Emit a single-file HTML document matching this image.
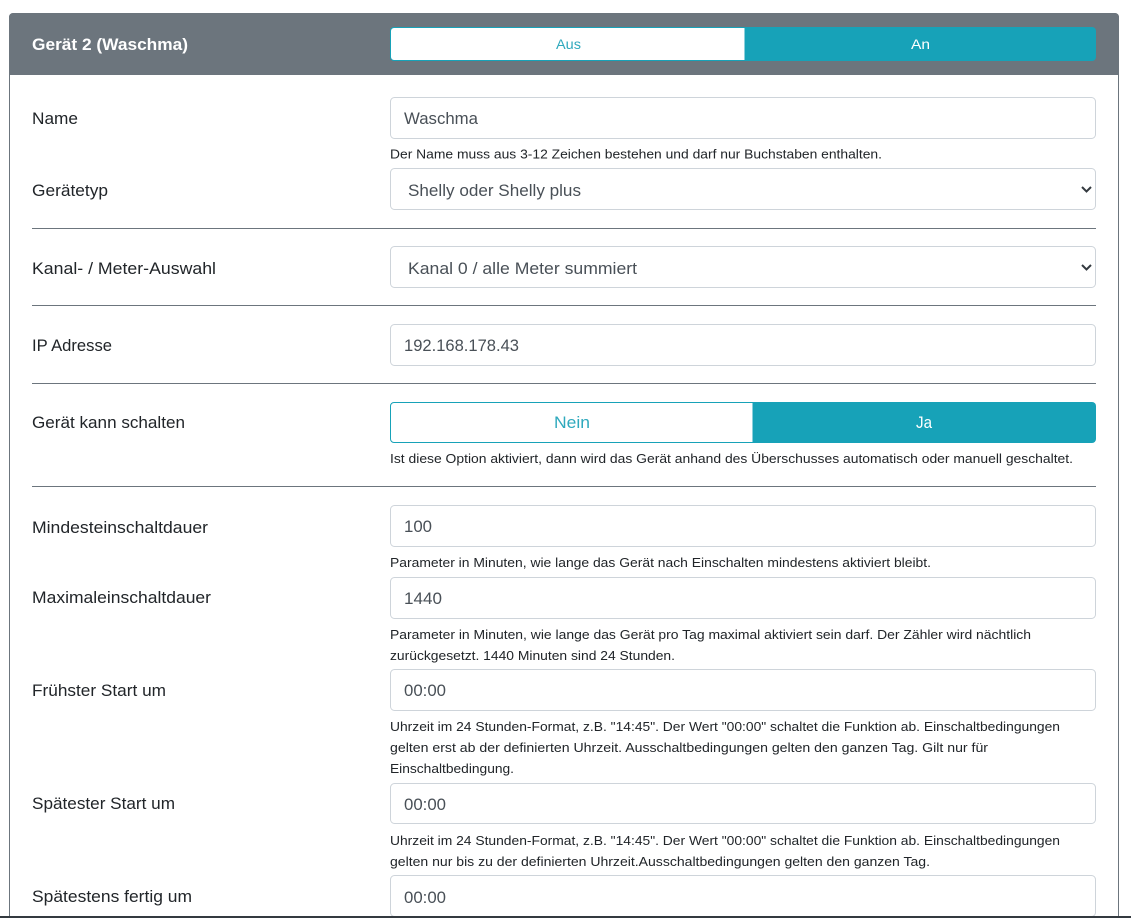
<!DOCTYPE html>
<html lang="de"><head><meta charset="utf-8"><title>Gerät 2</title>
<style>
html,body{margin:0;padding:0;background:#fff;width:1131px;height:918px;overflow:hidden}
svg{display:block}
text{font-family:"Liberation Sans",sans-serif;white-space:pre}
.l{font-size:16.5px;fill:#212529}
.i{font-size:16.5px;fill:#495057}
.s{font-size:13.2px;fill:#212529}
.b{fill:#fff;stroke:#ced4da;stroke-width:1}
.h{fill:#6c757d}
</style></head><body>
<svg width="1131" height="918" viewBox="0 0 1131 918" xmlns="http://www.w3.org/2000/svg">
<rect x="9.5" y="13.5" width="1109" height="920" rx="4" fill="#fff" stroke="#6c757d"/>
<path d="M9 75V17a4 4 0 0 1 4-4h1102a4 4 0 0 1 4 4v58z" fill="#6c757d"/>
<text x="32" y="50" font-size="16.5" font-weight="700" fill="#fff" textLength="156" lengthAdjust="spacingAndGlyphs">Gerät 2 (Waschma)</text>

<path d="M745 27.500H394a3.500 3.500 0 0 0-3.500 3.500v26a3.500 3.500 0 0 0 3.500 3.500h351z" fill="#fff" stroke="#17a2b8"/>
<path d="M745 27h347a4 4 0 0 1 4 4v26a4 4 0 0 1-4 4h-347z" fill="#17a2b8"/>
<text x="556" y="49" font-size="14" fill="#2fa9bd" textLength="25" lengthAdjust="spacingAndGlyphs">Aus</text>
<text x="911" y="49" font-size="14" fill="#fff" textLength="19" lengthAdjust="spacingAndGlyphs">An</text>

<text class="l" x="32" y="124" textLength="46" lengthAdjust="spacingAndGlyphs">Name</text>
<rect class="b" x="390.500" y="97.500" width="705" height="41" rx="4"/>
<text class="i" x="404" y="124" textLength="74" lengthAdjust="spacingAndGlyphs">Waschma</text>
<text class="s" x="390" y="158.500" textLength="492" lengthAdjust="spacingAndGlyphs">Der Name muss aus 3-12 Zeichen bestehen und darf nur Buchstaben enthalten.</text>

<text class="l" x="32" y="196" textLength="76" lengthAdjust="spacingAndGlyphs">Gerätetyp</text>
<rect class="b" x="390.500" y="168.500" width="705" height="41" rx="4"/>
<text class="i" x="408" y="196" textLength="173" lengthAdjust="spacingAndGlyphs">Shelly oder Shelly plus</text>
<path d="M1082 187l4.500 4.500 4.500-4.500" fill="none" stroke="#343a40" stroke-width="2"/>
<rect class="h" x="32" y="228" width="1064" height="1"/>

<text class="l" x="32" y="274" textLength="184" lengthAdjust="spacingAndGlyphs">Kanal- / Meter-Auswahl</text>
<rect class="b" x="390.500" y="246.500" width="705" height="41" rx="4"/>
<text class="i" x="408" y="274" textLength="229" lengthAdjust="spacingAndGlyphs">Kanal 0 / alle Meter summiert</text>
<path d="M1082 265l4.500 4.500 4.500-4.500" fill="none" stroke="#343a40" stroke-width="2"/>
<rect class="h" x="32" y="305" width="1064" height="1"/>

<text class="l" x="32" y="351" textLength="80" lengthAdjust="spacingAndGlyphs">IP Adresse</text>
<rect class="b" x="390.500" y="324.500" width="705" height="41" rx="4"/>
<text class="i" x="404" y="351" textLength="115" lengthAdjust="spacingAndGlyphs">192.168.178.43</text>
<rect class="h" x="32" y="383" width="1064" height="1"/>

<text class="l" x="32" y="428" textLength="153" lengthAdjust="spacingAndGlyphs">Gerät kann schalten</text>
<path d="M753 402.500H394a3.500 3.500 0 0 0-3.500 3.500v33a3.500 3.500 0 0 0 3.500 3.500h359z" fill="#fff" stroke="#17a2b8"/>
<path d="M753 402h339a4 4 0 0 1 4 4v33a4 4 0 0 1-4 4h-339z" fill="#17a2b8"/>
<text x="554" y="428" font-size="16.500" fill="#2fa9bd" textLength="36" lengthAdjust="spacingAndGlyphs">Nein</text>
<text x="916" y="428" font-size="16.500" fill="#fff" textLength="16" lengthAdjust="spacingAndGlyphs">Ja</text>
<text class="s" x="390" y="463" textLength="683" lengthAdjust="spacingAndGlyphs">Ist diese Option aktiviert, dann wird das Gerät anhand des Überschusses automatisch oder manuell geschaltet.</text>
<rect class="h" x="32" y="486" width="1064" height="1"/>

<text class="l" x="32" y="533" textLength="176" lengthAdjust="spacingAndGlyphs">Mindesteinschaltdauer</text>
<rect class="b" x="390.500" y="505.500" width="705" height="41" rx="4"/>
<text class="i" x="404" y="532" textLength="28" lengthAdjust="spacingAndGlyphs">100</text>
<text class="s" x="390" y="567" textLength="541" lengthAdjust="spacingAndGlyphs">Parameter in Minuten, wie lange das Gerät nach Einschalten mindestens aktiviert bleibt.</text>

<text class="l" x="32" y="603" textLength="179" lengthAdjust="spacingAndGlyphs">Maximaleinschaltdauer</text>
<rect class="b" x="390.500" y="577.500" width="705" height="41" rx="4"/>
<text class="i" x="404" y="604" textLength="38" lengthAdjust="spacingAndGlyphs">1440</text>
<text class="s" x="390" y="639" textLength="641" lengthAdjust="spacingAndGlyphs">Parameter in Minuten, wie lange das Gerät pro Tag maximal aktiviert sein darf. Der Zähler wird nächtlich</text>
<text class="s" x="390" y="660" textLength="285" lengthAdjust="spacingAndGlyphs">zurückgesetzt. 1440 Minuten sind 24 Stunden.</text>

<text class="l" x="32" y="696" textLength="134" lengthAdjust="spacingAndGlyphs">Frühster Start um</text>
<rect class="b" x="390.500" y="669.500" width="705" height="41" rx="4"/>
<text class="i" x="404" y="696" textLength="42" lengthAdjust="spacingAndGlyphs">00:00</text>
<text class="s" x="390" y="731" textLength="670" lengthAdjust="spacingAndGlyphs">Uhrzeit im 24 Stunden-Format, z.B. "14:45". Der Wert "00:00" schaltet die Funktion ab. Einschaltbedingungen</text>
<text class="s" x="390" y="752" textLength="598" lengthAdjust="spacingAndGlyphs">gelten erst ab der definierten Uhrzeit. Ausschaltbedingungen gelten den ganzen Tag. Gilt nur für</text>
<text class="s" x="390" y="773" textLength="124" lengthAdjust="spacingAndGlyphs">Einschaltbedingung.</text>

<text class="l" x="32" y="809" textLength="143" lengthAdjust="spacingAndGlyphs">Spätester Start um</text>
<rect class="b" x="390.500" y="783.500" width="705" height="40" rx="4"/>
<text class="i" x="404" y="810" textLength="42" lengthAdjust="spacingAndGlyphs">00:00</text>
<text class="s" x="390" y="845" textLength="670" lengthAdjust="spacingAndGlyphs">Uhrzeit im 24 Stunden-Format, z.B. "14:45". Der Wert "00:00" schaltet die Funktion ab. Einschaltbedingungen</text>
<text class="s" x="390" y="866" textLength="540" lengthAdjust="spacingAndGlyphs">gelten nur bis zu der definierten Uhrzeit.Ausschaltbedingungen gelten den ganzen Tag.</text>

<text class="l" x="32" y="902" textLength="160" lengthAdjust="spacingAndGlyphs">Spätestens fertig um</text>
<rect class="b" x="390.500" y="875.500" width="705" height="41" rx="4"/>
<text class="i" x="404" y="903" textLength="42" lengthAdjust="spacingAndGlyphs">00:00</text>

<rect x="0" y="916" width="1131" height="2" fill="#343a40"/>
</svg>
</body></html>
